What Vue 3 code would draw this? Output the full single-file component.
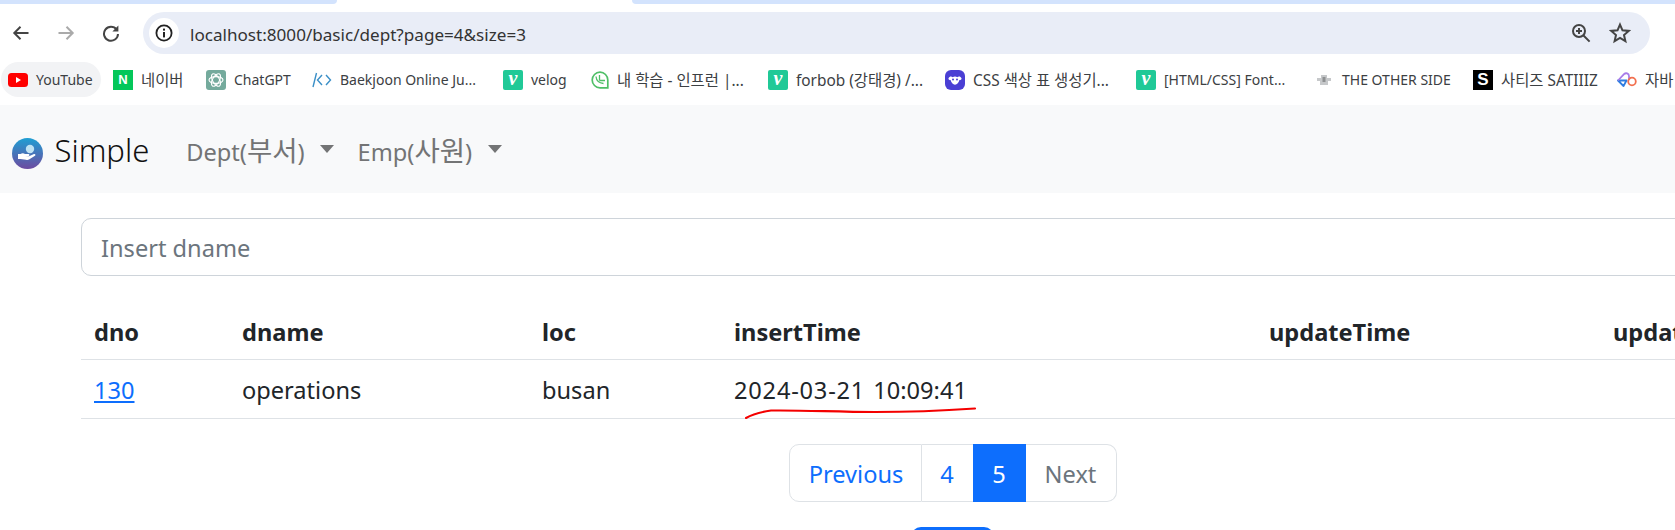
<template>
  <div class="page">
    <!-- 브라우저 상단 -->
    <div class="tabstrip">
      <div class="tab tab--left"></div>
      <div class="tab tab--right"></div>
    </div>

    <div class="toolbar">
      <svg class="tool tool--back" width="18" height="18" viewBox="0 0 18 18">
        <path d="M16.5 9H2.5M8.5 2.8 2.3 9l6.2 6.2" />
      </svg>
      <svg class="tool tool--forward" width="18" height="18" viewBox="0 0 18 18">
        <path d="M1.5 9h14M9.5 2.8 15.7 9l-6.2 6.2" />
      </svg>
      <svg class="tool tool--reload" width="18" height="18" viewBox="0 0 18 18">
        <path d="M14.6 5.6A7 7 0 1 0 16 10" />
        <path class="solid" d="M16.4 1.6v6h-6z" />
      </svg>
      <div class="omnibox">
        <span class="omnibox__info">
          <svg width="18" height="18" viewBox="0 0 18 18">
            <circle cx="9" cy="9" r="7.6" fill="none" stroke="#222" stroke-width="1.8" />
            <rect x="8" y="8" width="2" height="5.4" fill="#222" />
            <rect x="8" y="4.6" width="2" height="2" fill="#222" />
          </svg>
        </span>
        <span class="omnibox__url">localhost:8000/basic/dept?page=4&amp;size=3</span>
        <svg class="omnibox__zoom" width="20" height="20" viewBox="0 0 20 20">
          <circle cx="8" cy="8" r="6" />
          <path d="M12.5 12.5 18.6 18.6M5 8h6M8 5v6" />
        </svg>
        <svg class="omnibox__star" width="22" height="22" viewBox="0 0 22 22">
          <path d="M11 2.6l2.5 5.7 6.2.6-4.7 4.1 1.4 6.1-5.4-3.2-5.4 3.2 1.4-6.1-4.7-4.1 6.2-.6z" />
        </svg>
      </div>
    </div>

    <div class="bookmarks">
      <div
        v-for="b in bookmarks"
        :key="b.label"
        class="bookmark"
        :class="{ 'bookmark--hover': b.icon === 'yt', 'bookmark--ko': b.ko }"
        :style="{ width: b.width + 'px' }"
      >
        <span class="bookmark__icon" :class="{ 'bookmark__icon--narrow': b.icon === 'inflearn' }">
          <svg v-if="b.icon === 'yt'" width="20" height="14" viewBox="0 0 20 14">
            <rect width="20" height="14" rx="3.5" fill="#f00" />
            <path d="M8 4l5 3-5 3z" fill="#fff" />
          </svg>
          <span v-else-if="b.icon === 'naver'" class="square square--naver">N</span>
          <svg v-else-if="b.icon === 'gpt'" width="20" height="20" viewBox="0 0 20 20">
            <rect width="20" height="20" rx="3" fill="#74aa9c" />
            <g fill="none" stroke="#fff" stroke-width="1.1">
              <ellipse cx="10" cy="10" rx="7" ry="3.4" />
              <ellipse cx="10" cy="10" rx="7" ry="3.4" transform="rotate(60 10 10)" />
              <ellipse cx="10" cy="10" rx="7" ry="3.4" transform="rotate(120 10 10)" />
            </g>
          </svg>
          <svg v-else-if="b.icon === 'boj'" width="20" height="16" viewBox="0 0 20 16">
            <path d="M4.5 1 1 15M10 3 5.5 8l4.5 5M14 3l4.5 5-4.5 5" fill="none" stroke="#3a8fc7" stroke-width="1.4" />
          </svg>
          <span v-else-if="b.icon === 'velog'" class="square square--velog">v</span>
          <svg v-else-if="b.icon === 'inflearn'" width="18" height="18" viewBox="0 0 18 18">
            <path d="M9 1.2a7.8 7.8 0 1 0 0 15.600h7.800V9A7.800 7.800 0 0 0 9 1.200z" fill="none" stroke="#4fbf67" stroke-width="1.7" />
            <path d="M5 5.500c.3 3.800 2.800 6.500 7.500 7M8.500 4v5.500M14 9.500H8.500" fill="none" stroke="#4fbf67" stroke-width="1.3" />
          </svg>
          <svg v-else-if="b.icon === 'css'" width="20" height="20" viewBox="0 0 20 20">
            <rect width="20" height="20" rx="6" fill="#4a3fd4" />
            <path d="M3.500 8.200c1-2 3-2 4.200-1 1.300-.8 3.300-.8 4.600 0 1.200-1 3.200-1 4.200 1 .4 1-1 2.300-2.200 1.900-.3 2.700-2.300 4.600-4.300 4.600S6 12.800 5.700 10.100C4.500 10.500 3.100 9.200 3.500 8.200z" fill="#fff" />
            <circle cx="8" cy="9.600" r="1" fill="#4a3fd4" />
            <circle cx="12" cy="9.600" r="1" fill="#4a3fd4" />
          </svg>
          <svg v-else-if="b.icon === 'other'" width="14" height="12" viewBox="0 0 14 12">
            <path d="M4 1h6v3h4v3h-3v4H3V7H0V4h4z" fill="#c6c8ca" />
            <rect x="5.500" y="3" width="3" height="5" fill="#8e9092" />
          </svg>
          <span v-else-if="b.icon === 'sat'" class="square square--sat">S</span>
          <svg v-else width="20" height="15" viewBox="0 0 20 15">
            <path d="M1 8.500h8.500L6.500 14z" fill="none" stroke="#2f7de1" stroke-width="1.800" stroke-linejoin="round" />
            <path d="M1 8.500 7 2.200c1.800-1.800 5-1 5 2V8" fill="none" stroke="#a77be8" stroke-width="1.800" />
            <circle cx="15" cy="9.500" r="3.800" fill="none" stroke="#f2704f" stroke-width="1.800" />
          </svg>
        </span>
        <span class="bookmark__label">{{ b.label }}</span>
      </div>
    </div>

    <!-- 앱 네비게이션 -->
    <nav class="navbar">
      <svg class="navbar__logo" width="31" height="31" viewBox="0 0 31 31">
        <defs>
          <linearGradient id="logoGrad" x1="0" y1="0" x2="0" y2="1">
            <stop offset="0" stop-color="#1f9fd3" />
            <stop offset="1" stop-color="#6d4ba0" />
          </linearGradient>
        </defs>
        <circle cx="15.500" cy="15.500" r="15.500" fill="url(#logoGrad)" />
        <circle cx="18" cy="11" r="4.200" fill="#bfe3f3" />
        <path d="M6 16h2.500c1.500-1 3-1 4.500 0h3.500c1.200 0 1.200 2 0 2H13l4 .2 5-2.200c1.300-.4 2 1 1 1.800l-6 3.700c-1 .5-2 .5-3 .2L8.500 21H6z" fill="#fff" />
      </svg>
      <span class="navbar__brand">Simple</span>
      <span class="navbar__link navbar__link--dept">Dept(<span class="ko">부서</span>)</span>
      <span class="caret caret--dept"></span>
      <span class="navbar__link navbar__link--emp">Emp(<span class="ko">사원</span>)</span>
      <span class="caret caret--emp"></span>
    </nav>

    <main class="container">
      <input class="search" type="text" placeholder="Insert dname" />

      <table class="table">
        <colgroup>
          <col v-for="c in columns" :key="c.name" :style="{ width: c.width + 'px' }" />
        </colgroup>
        <thead>
          <tr>
            <th v-for="c in columns" :key="c.name">{{ c.name }}</th>
          </tr>
        </thead>
        <tbody>
          <tr>
            <td><a class="link">130</a></td>
            <td>operations</td>
            <td>busan</td>
            <td class="datetime"><span class="datetime__date">2024-03-21</span> 10:09:41</td>
            <td></td>
            <td></td>
          </tr>
        </tbody>
      </table>

      <ul class="pagination">
        <li class="page-item page-item--prev">Previous</li>
        <li class="page-item page-item--num">4</li>
        <li class="page-item page-item--active">5</li>
        <li class="page-item page-item--next">Next</li>
      </ul>

      <div class="bottom-btn"></div>
    </main>

    <!-- 빨간 밑줄 (손으로 그은 표시) -->
    <svg class="scribble" width="240" height="16" viewBox="0 0 240 16">
      <path d="M1 14C8 10 16 8 26 6.500 60 6 90 8 130 8c40 0 70-1.500 100-3.500" />
    </svg>
  </div>
</template>

<script setup>
const bookmarks = [
  { icon: 'yt', label: 'YouTube', width: 105 },
  { icon: 'naver', label: '네이버', width: 93, ko: true },
  { icon: 'gpt', label: 'ChatGPT', width: 106 },
  { icon: 'boj', label: 'Baekjoon Online Ju...', width: 191 },
  { icon: 'velog', label: 'velog', width: 88 },
  { icon: 'inflearn', label: '내 학습 - 인프런 |...', width: 177, ko: true },
  { icon: 'velog', label: 'forbob (강태경) /...', width: 177, ko: true },
  { icon: 'css', label: 'CSS 색상 표 생성기...', width: 191, ko: true },
  { icon: 'velog', label: '[HTML/CSS] Font...', width: 178 },
  { icon: 'other', label: 'THE OTHER SIDE', width: 159 },
  { icon: 'sat', label: '사티즈 SATIIIZ', width: 144, ko: true },
  { icon: 'knot', label: '자바', width: 58, ko: true },
]

const columns = [
  { name: 'dno', width: 148 },
  { name: 'dname', width: 300 },
  { name: 'loc', width: 192 },
  { name: 'insertTime', width: 535 },
  { name: 'updateTime', width: 344 },
  { name: 'update', width: 224 },
]
</script>

<style>
html, body { margin: 0; background: #fff; overflow: hidden; }
</style>

<style scoped>
.page {
  position: relative;
  width: 1675px;
  height: 530px;
  overflow: hidden;
  font-family: "Noto Sans", "Noto Sans CJK KR", sans-serif;
  color: #212529;
}

.tabstrip { display: flex; justify-content: space-between; height: 4px; }
.tab { background: #d3e3fd; height: 4px; }
.tab--left { width: 337px; border-bottom-right-radius: 8px; }
.tab--right { width: 1043px; border-bottom-left-radius: 8px; }

.toolbar { display: flex; align-items: center; height: 58px; }
.tool { fill: none; stroke-width: 2; flex: none; }
.tool .solid { fill: #444; stroke: none; }
.tool--back { margin-left: 12px; stroke: #444; }
.tool--forward { margin-left: 27px; stroke: #aaa; }
.tool--reload { margin-left: 27px; stroke: #444; }

.omnibox {
  display: flex;
  align-items: center;
  width: 1507px;
  height: 42px;
  margin-left: 23px;
  background: #e9edf7;
  border-radius: 21px;
}
.omnibox__info {
  display: flex;
  align-items: center;
  justify-content: center;
  width: 30px;
  height: 30px;
  margin-left: 6px;
  background: #fff;
  border-radius: 50%;
}
.omnibox__url {
  margin: 2px 0 0 11px;
  font-size: 17.1px;
  color: #333;
  white-space: nowrap;
}
.omnibox__zoom {
  margin-left: auto;
  fill: none;
  stroke: #444;
  stroke-width: 2;
}
.omnibox__star {
  margin: 0 19px 0 18px;
  fill: none;
  stroke: #444;
  stroke-width: 2;
}

.bookmarks { display: flex; align-items: flex-start; height: 43px; }
.bookmark {
  display: flex;
  align-items: center;
  flex: none;
  height: 35px;
  font-size: 14px;
  color: #3c4043;
  white-space: nowrap;
}
.bookmark--ko { font-size: 15.4px; }
.bookmark:first-child { margin-left: 8px; position: relative; }
.bookmark--hover::before {
  content: "";
  position: absolute;
  left: -7px;
  top: 0;
  width: 100px;
  height: 35px;
  background: #f2f3f5;
  border-radius: 18px;
}
.bookmark__icon {
  position: relative;
  display: flex;
  align-items: center;
  justify-content: center;
  flex: none;
  width: 20px;
  height: 20px;
  margin-right: 8px;
}
.bookmark__icon--narrow { width: 18px; }
.bookmark__label { position: relative; }

.square {
  display: flex;
  align-items: center;
  justify-content: center;
  width: 20px;
  height: 20px;
  color: #fff;
  font-weight: 700;
  line-height: 1;
}
.square--naver { background: #03c75a; font-size: 13px; font-family: "Liberation Sans", sans-serif; }
.square--velog {
  background: #20c997;
  border-radius: 2px;
  font-family: "Liberation Serif", serif;
  font-style: italic;
  font-size: 20px;
  padding-bottom: 3px;
  box-sizing: border-box;
}
.square--sat { background: #000; font-size: 17px; font-family: "Liberation Sans", sans-serif; }

.navbar {
  display: flex;
  align-items: center;
  height: 88px;
  padding-left: 12px;
  background: #f8f9fa;
}
.navbar__logo { margin-top: 8px; flex: none; }
.navbar__brand { margin: 2px 0 0 11.5px; font-size: 31px; font-weight: 300; color: #111; }
.navbar__link { font-size: 23.6px; color: #737475; white-space: nowrap; }
.navbar__link .ko { font-size: 27.5px; }
.navbar__link--dept { margin-left: 37px; }
.navbar__link--emp { margin-left: 24px; }
.caret {
  width: 0;
  height: 0;
  border-top: 8px solid #737475;
  border-left: 7.5px solid transparent;
  border-right: 7.5px solid transparent;
}
.caret--dept { margin-left: 15px; }
.caret--emp { margin-left: 16px; }

.container { width: 1743px; margin-left: 81px; }

.search {
  display: block;
  box-sizing: border-box;
  width: 100%;
  height: 58px;
  margin-top: 25px;
  padding: 2px 19px 0;
  font: inherit;
  font-size: 23.6px;
  color: #212529;
  background: #fff;
  border: 1px solid #ced4da;
  border-radius: 10px;
  outline: none;
}
.search::placeholder { color: #6c757d; opacity: 1; }

.table {
  width: 1743px;
  margin-top: 28px;
  table-layout: fixed;
  border-collapse: collapse;
  font-size: 23.6px;
}
.table th, .table td {
  padding: 0 13px;
  text-align: left;
  white-space: nowrap;
  border-bottom: 1px solid #dee2e6;
}
.table th { height: 55px; font-weight: 700; }
.table td { height: 59px; padding-top: 2px; box-sizing: border-box; }
.link { color: #0d6efd; text-decoration: underline; }
.datetime { word-spacing: 2px; }
.datetime__date { letter-spacing: 0.8px; }

.pagination {
  display: flex;
  justify-content: center;
  height: 58px;
  margin: 25px 0 0;
  padding: 0;
  list-style: none;
  font-size: 23.6px;
}
.page-item {
  display: flex;
  align-items: center;
  justify-content: center;
  box-sizing: border-box;
  padding-top: 2px;
  color: #0d6efd;
  background: #fff;
  border: 1px solid #dee2e6;
}
.page-item--prev { width: 133px; padding-left: 2px; border-radius: 10px 0 0 10px; }
.page-item--num { width: 51px; border-left: none; border-right: none; }
.page-item--active { width: 53px; color: #fff; background: #0d6efd; border-color: #0d6efd; }
.page-item--next { width: 91px; color: #6c757d; border-left: none; border-radius: 0 10px 10px 0; }

.bottom-btn {
  width: 83px;
  height: 20px;
  margin: 25px auto 0;
  background: #0d6efd;
  border-radius: 10px 10px 0 0;
}

.scribble { position: absolute; left: 745px; top: 404px; }
.scribble path { fill: none; stroke: #f40000; stroke-width: 2.1; stroke-linecap: round; }
</style>
